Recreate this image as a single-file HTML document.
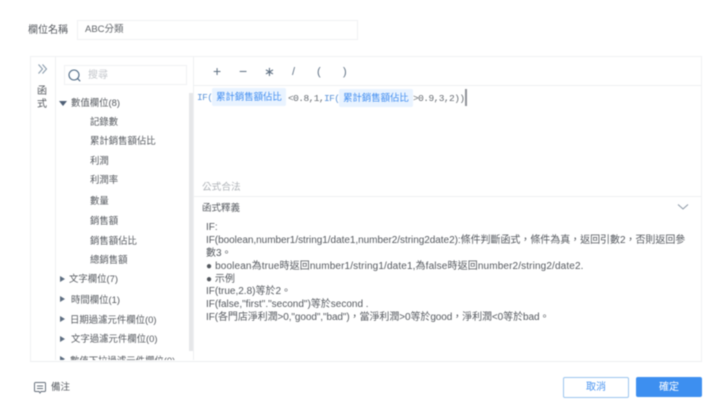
<!DOCTYPE html>
<html lang="zh-Hant">
<head>
<meta charset="utf-8">
<style>
html,body{margin:0;padding:0;background:#fff}
#p{position:relative;width:728px;height:401px;overflow:hidden;background:#fff;font-family:"Liberation Sans","Noto Sans CJK TC",sans-serif;color:#555;filter:blur(.45px)}
.t{position:absolute;white-space:nowrap;font-size:10px;line-height:14px;color:#54585e}
.s{font-size:9.4px}
.l{position:absolute;background:#eef0f2}
.m{font-family:"Liberation Mono","Noto Sans CJK TC",monospace;font-size:9.5px;letter-spacing:-.55px}
.tag{position:absolute;background:#e9f3ff;color:#3f8cf0;font-size:9.4px;line-height:18px;height:18px;text-align:center;white-space:nowrap;border-radius:2px}
.ar{position:absolute;width:0;height:0}
.r{border-top:3.5px solid transparent;border-bottom:3.5px solid transparent;border-left:5px solid #5d6d80}
.d{border-left:4px solid transparent;border-right:4px solid transparent;border-top:5px solid #4f6076}
.d2{font-size:10px;line-height:12.9px}
.o{color:#5d6f82}
</style>
</head>
<body>
<div id="p">
<div class="t" style="left:28px;top:24px">欄位名稱</div>
<div style="position:absolute;left:77px;top:20px;width:279px;height:18px;border:1px solid #f0f1f3"></div>
<div class="t" style="left:85px;top:23px;color:#5f6368;font-size:9.5px">ABC分類</div>

<div style="position:absolute;left:30px;top:56px;width:670px;height:304px;border:1px solid #f0f1f3;border-bottom-color:#edeef0"></div>
<div class="l" style="left:55px;top:57px;width:1px;height:303px"></div>
<div class="l" style="left:193px;top:57px;width:1px;height:303px"></div>
<div class="l" style="left:194px;top:85px;width:507px;height:1px"></div>
<div class="l" style="left:194px;top:196px;width:507px;height:1px"></div>

<svg style="position:absolute;left:37px;top:63px" width="12" height="12" viewBox="0 0 12 12" fill="none" stroke="#8496a8" stroke-width="1"><path d="M1.5 1.5l4 4.5-4 4.5M5.5 1.5l4 4.5-4 4.5"/></svg>
<div class="t" style="left:37px;top:84.5px;line-height:13.5px;width:11px;white-space:normal">函式</div>

<div style="position:absolute;left:64px;top:65px;width:121px;height:18px;border:1px solid #f0f1f3"></div>
<svg style="position:absolute;left:67px;top:68px" width="15" height="15" viewBox="0 0 15 15" fill="none" stroke="#4f6a85" stroke-width="1.1"><circle cx="7" cy="7" r="5"/><path d="M10.6 10.6l2.6 2.6"/></svg>
<div class="t" style="left:88px;top:69px;color:#c3c6cb">搜尋</div>

<div style="position:absolute;left:189px;top:93px;width:4px;height:258px;background:#e6e7e9"></div>

<div class="ar d" style="left:59px;top:101px"></div>
<div class="t s" style="left:71px;top:96px">數值欄位(8)</div>
<div class="t s" style="left:90px;top:115px">記錄數</div>
<div class="t s" style="left:90px;top:134px">累計銷售額佔比</div>
<div class="t s" style="left:90px;top:154px">利潤</div>
<div class="t s" style="left:90px;top:173px">利潤率</div>
<div class="t s" style="left:90px;top:194px">數量</div>
<div class="t s" style="left:90px;top:214px">銷售額</div>
<div class="t s" style="left:90px;top:234px">銷售額佔比</div>
<div class="t s" style="left:90px;top:253px">總銷售額</div>

<div class="ar r" style="left:60px;top:276px"></div>
<div class="t s" style="left:69px;top:272px">文字欄位(7)</div>
<div class="ar r" style="left:60px;top:296px"></div>
<div class="t s" style="left:71px;top:293px">時間欄位(1)</div>
<div class="ar r" style="left:60px;top:316px"></div>
<div class="t s" style="left:70px;top:313px">日期過濾元件欄位(0)</div>
<div class="ar r" style="left:60px;top:336px"></div>
<div class="t s" style="left:71px;top:332px">文字過濾元件欄位(0)</div>
<div style="position:absolute;left:58px;top:355px;width:130px;height:5px;overflow:hidden">
<div class="ar r" style="left:2px;top:1px"></div>
<div class="t s" style="left:12px;top:-1px">數值下拉過濾元件欄位(0)</div>
</div>

<div class="t o" style="left:213px;top:64px;font-size:14px">+</div>
<div class="t o" style="left:239px;top:64px;font-size:14px">−</div>
<div class="t o" style="left:264px;top:65px;font-size:13px">∗</div>
<div class="t o" style="left:292px;top:65px;font-size:11px">/</div>
<div class="t o" style="left:317px;top:65px;font-size:11px">(</div>
<div class="t o" style="left:343px;top:65px;font-size:11px">)</div>

<div class="t m" style="left:197px;top:91px;color:#5b93d8">IF(</div>
<div class="tag" style="left:212px;top:88px;width:74px">累計銷售額佔比</div>
<div class="t m" style="left:288px;top:91.5px;color:#666b71">&lt;0.8,1,</div>
<div class="t m" style="left:324px;top:91.5px;color:#5b93d8">IF(</div>
<div class="tag" style="left:339px;top:89px;width:74px">累計銷售額佔比</div>
<div class="t m" style="left:413px;top:91.5px;color:#666b71">&gt;0.9,3,2))</div>
<div style="position:absolute;left:465px;top:89px;width:1.5px;height:17px;background:#8e9297"></div>

<div class="t" style="left:202px;top:181px;color:#aeb2b7;font-size:9.7px">公式合法</div>
<div class="t" style="left:202px;top:201.5px;font-size:9.5px">函式釋義</div>
<svg style="position:absolute;left:677px;top:203px" width="12" height="8" viewBox="0 0 12 8" fill="none" stroke="#8b97a5" stroke-width="1"><path d="M1 1.5l5 4.5 5-4.5"/></svg>

<div class="t d2" style="left:206px;top:221.5px">IF:</div>
<div class="t d2" style="left:206px;top:234.5px;letter-spacing:-.04px">IF(boolean,number1/string1/date1,number2/string2date2):條件判斷函式，條件為真，返回引數2，否則返回參</div>
<div class="t d2" style="left:206px;top:247.5px">數3。</div>
<div class="t d2" style="left:206px;top:260.5px;letter-spacing:.13px">● boolean為true時返回number1/string1/date1,為false時返回number2/string2/date2.</div>
<div class="t d2" style="left:206px;top:273.5px">● 示例</div>
<div class="t d2" style="left:206px;top:286px">IF(true,2.8)等於2。</div>
<div class="t d2" style="left:206px;top:299px">IF(false,"first"."second")等於second .</div>
<div class="t d2" style="left:206px;top:312px;letter-spacing:-.08px">IF(各門店淨利潤&gt;0,"good","bad")，當淨利潤&gt;0等於good，淨利潤&lt;0等於bad。</div>

<svg style="position:absolute;left:33px;top:381px" width="14" height="14" viewBox="0 0 14 14" fill="none" stroke="#66707c" stroke-width="1"><path d="M2.5 1.5h9a1 1 0 0 1 1 1v7a1 1 0 0 1-1 1H8l-1 1.5-1-1.5H2.5a1 1 0 0 1-1-1v-7a1 1 0 0 1 1-1z"/><path d="M4 5h6M4 7.5h6"/></svg>
<div class="t" style="left:51px;top:381px;font-size:9.5px">備注</div>

<div style="position:absolute;left:563px;top:377px;width:64px;height:19px;border:1px solid #9cc5ee;border-radius:2px;color:#4a94f0;font-size:10px;line-height:20px;text-align:center">取消</div>
<div style="position:absolute;left:636px;top:377px;width:66px;height:20px;background:#3d8ff0;border-radius:2px;color:#fff;font-size:10px;line-height:21px;text-align:center">確定</div>
</div>
</body>
</html>
